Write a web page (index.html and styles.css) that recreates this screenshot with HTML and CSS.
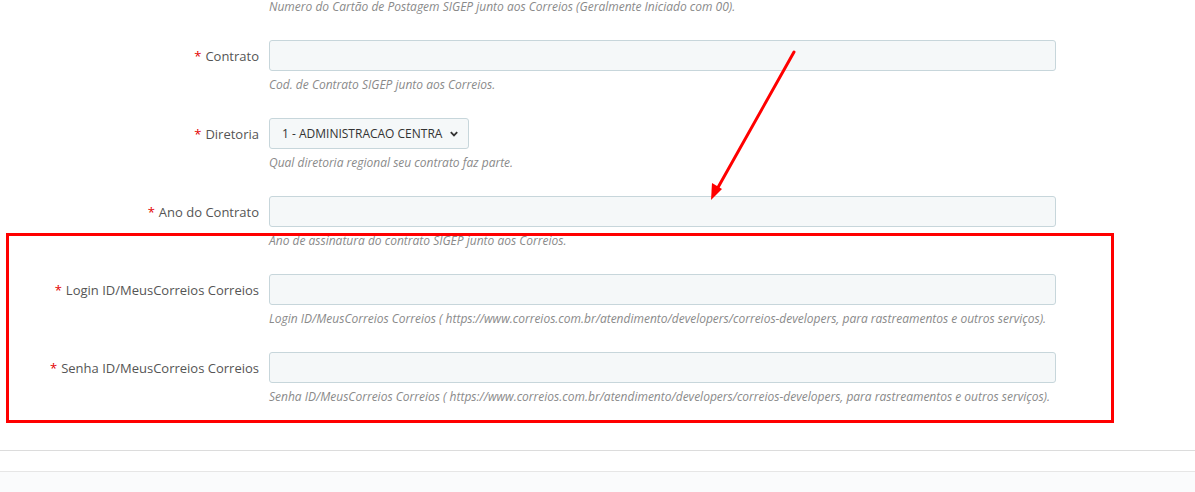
FILE: index.html
```html
<!DOCTYPE html>
<html lang="pt-BR">
<head>
<meta charset="utf-8">
<title>Configuração SIGEP</title>
<link rel="stylesheet" href="styles.css">
</head>
<body>
<div class="page">
  <form class="form">
    <div class="row row-first">
      <div class="label"></div>
      <div class="control">
        <p class="help">Numero do Cartão de Postagem SIGEP junto aos Correios (Geralmente Iniciado com 00).</p>
      </div>
    </div>
    <div class="row">
      <label class="label"><span class="req">*</span> Contrato</label>
      <div class="control">
        <input class="input" type="text">
        <p class="help">Cod. de Contrato SIGEP junto aos Correios.</p>
      </div>
    </div>
    <div class="row">
      <label class="label"><span class="req">*</span> Diretoria</label>
      <div class="control">
        <div class="select">
          <span class="select-text">1 - ADMINISTRACAO CENTRA</span>
          <svg class="chev" width="10" height="8" viewBox="0 0 10 8"><path d="M1.8 2.2 L5 5.4 L8.2 2.2" fill="none" stroke="#333" stroke-width="1.8"/></svg>
        </div>
        <p class="help">Qual diretoria regional seu contrato faz parte.</p>
      </div>
    </div>
    <div class="row">
      <label class="label"><span class="req">*</span> Ano do Contrato</label>
      <div class="control">
        <input class="input" type="text">
        <p class="help">Ano de assinatura do contrato SIGEP junto aos Correios.</p>
      </div>
    </div>
    <div class="row">
      <label class="label"><span class="req">*</span> Login ID/MeusCorreios Correios</label>
      <div class="control">
        <input class="input" type="text">
        <p class="help">Login ID/MeusCorreios Correios ( https://www.correios.com.br/atendimento/developers/correios-developers, para rastreamentos e outros serviços).</p>
      </div>
    </div>
    <div class="row">
      <label class="label"><span class="req">*</span> Senha ID/MeusCorreios Correios</label>
      <div class="control">
        <input class="input" type="text">
        <p class="help">Senha ID/MeusCorreios Correios ( https://www.correios.com.br/atendimento/developers/correios-developers, para rastreamentos e outros serviços).</p>
      </div>
    </div>
  </form>
  <div class="footer-gap"></div>
  <div class="footer-strip"></div>
  <div class="footer-bar"></div>

  <div class="highlight"></div>
  <svg class="arrow" width="1195" height="492" viewBox="0 0 1195 492">
    <line x1="794" y1="52" x2="716" y2="191" stroke="#ff0000" stroke-width="3" stroke-linecap="round"/>
    <polygon points="711,200 712,183 722,189" fill="#ff0000"/>
  </svg>
</div>
</body>
</html>
```
FILE: styles.css
```css
* { box-sizing: border-box; }
html, body { margin: 0; padding: 0; background: #fff; }
body {
  font-family: "Open Sans", "Noto Sans", sans-serif;
  color: #555;
  width: 1195px;
  height: 492px;
  overflow: hidden;
}
.page { position: relative; width: 1195px; height: 492px; }

.form { display: flex; flex-direction: column; gap: 25px; }
.row {
  display: grid;
  grid-template-columns: 259px 787px;
  column-gap: 10px;
  align-items: start;
}
.row-first { margin-top: -2px; }
.label {
  height: 31px;
  display: flex;
  align-items: center;
  justify-content: flex-end;
  font-size: 13px;
  color: #555;
  white-space: nowrap;
}
.row-first .label { height: 0; }
.req { color: #e30000; margin-right: 4px; font-size: 13px; }
.control { display: flex; flex-direction: column; }
.input {
  display: block;
  width: 787px;
  height: 31px;
  margin: 0;
  border: 1px solid #c7d6db;
  border-radius: 3px;
  background: #f5f8f9;
  font: inherit;
}
.select {
  width: 200px;
  height: 31px;
  border: 1px solid #c7d6db;
  border-radius: 3px;
  background: #f5f8f9;
  display: flex;
  align-items: center;
  justify-content: space-between;
  padding: 0 9px 0 12px;
  font-size: 12px;
  color: #333;
}
.chev { display: block; }
.help {
  margin: 5px 0 0;
  font-size: 12px;
  line-height: 17px;
  font-style: italic;
  color: #8a8a8a;
  white-space: nowrap;
}
.row-first .help { margin-top: 0; }

.footer-gap { height: 45px; }
.footer-strip { height: 21px; border-top: 1px solid #dcdcdc; background: #fff; }
.footer-bar { height: 30px; border-top: 1px solid #e6e6e6; background: #fafbfc; }

.highlight {
  position: absolute;
  left: 6px;
  top: 233px;
  width: 1108px;
  height: 190px;
  border: 3px solid #ff0000;
}
.arrow { position: absolute; left: 0; top: 0; pointer-events: none; }
```
